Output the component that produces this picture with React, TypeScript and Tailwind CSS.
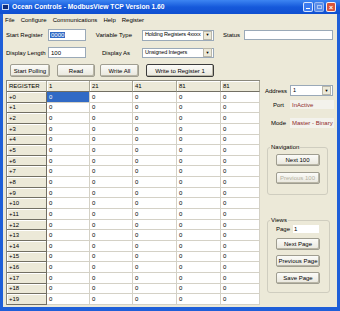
import React from 'react';

const cols = ['REGISTER', '1', '21', '41', '81', '81'];
const rows = Array.from({ length: 20 }, (_, i) => `+${i}`);

const Btn: React.FC<{ label: string; className?: string; disabled?: boolean; isDefault?: boolean }> = ({
  label,
  className = '',
  disabled,
  isDefault,
}) => (
  <div
    className={`flex items-center justify-center rounded-[2px] bg-gradient-to-b from-[#fbfbf8] to-[#e9e7dd] shadow-[inset_-1px_-1px_0_#b9b6a6] ${
      isDefault ? 'border border-[#3b3b3b]' : 'border border-[#9f9d90]'
    } ${disabled ? 'text-[#b5b2a4]' : 'text-black'} ${className}`}
  >
    {label}
  </div>
);

const Select: React.FC<{ value: string; className?: string }> = ({ value, className = '' }) => (
  <div className={`flex items-center bg-white border border-[#9aa9b8] ${className}`}>
    <span className="flex-1 pl-[2px] whitespace-nowrap overflow-hidden text-[5.5px] tracking-[-0.15px]">{value}</span>
    <span className="w-[9px] h-[9px] mr-[1px] flex items-center justify-center bg-[#ece9d8] border border-[#b9b7aa] text-[4px] leading-none">
      ▼
    </span>
  </div>
);

export default function App() {
  return (
    <div className="w-[340px] h-[311px] flex flex-col bg-[#1f5fd8] font-['Liberation_Sans',Arial,sans-serif] text-[6px] leading-none text-black overflow-hidden">
      {/* Title bar */}
      <div className="h-[14px] flex items-center bg-gradient-to-b from-[#3d85f2] via-[#1659db] to-[#0f4fd0] pl-[2px] pr-[4px]">
        <div className="w-[7px] h-[6px] bg-[#0d2c7a] border border-[#c9d7ef]" />
        <span className="ml-[3px] text-white font-bold text-[6.7px]">
          Ocean Controls - ModbusView TCP Version 1.60
        </span>
        <div className="ml-auto flex gap-[1px]">
          <div className="w-[10px] h-[10px] rounded-[2px] border border-white/80 bg-[#3c7bf0] flex items-end justify-center pb-[2px]">
            <div className="w-[4px] h-[1.5px] bg-white" />
          </div>
          <div className="w-[10px] h-[10px] rounded-[2px] border border-white/40 bg-[#5b8de8] flex items-center justify-center">
            <div className="w-[5px] h-[4px] border border-white/50" />
          </div>
          <div className="ml-[1px] w-[10px] h-[10px] rounded-[2px] border border-white/90 bg-[#d9553a] text-white text-[7px] font-bold flex items-center justify-center">
            ×
          </div>
        </div>
      </div>

      {/* Body */}
      <div className="flex-1 mx-[3px] mb-[4px] bg-[#ece9d8] flex flex-col">
        {/* Menu */}
        <div className="h-[11px] flex items-center pl-[2px] gap-[6px]">
          <span>File</span>
          <span>Configure</span>
          <span>Communications</span>
          <span>Help</span>
          <span>Register</span>
        </div>

        {/* Row 1 */}
        <div className="mt-[4px] h-[12px] flex items-center pl-[3px]">
          <span className="w-[42px]">Start Register</span>
          <div className="w-[38px] h-[12px] bg-white border border-[#9aa9b8] flex items-center pl-[1px]">
            <span className="bg-[#316ac5] text-white px-[1px]">0000</span>
          </div>
          <span className="w-[56px] text-right pr-[10px]">Variable Type</span>
          <Select value="Holding Registers 4xxxx" className="w-[72px] h-[11px]" />
          <span className="ml-[9px] w-[21px]">Status</span>
          <div className="w-[89px] h-[10px] bg-white border border-[#9aa9b8]" />
        </div>

        {/* Row 2 */}
        <div className="mt-[6px] h-[11px] flex items-center pl-[3px]">
          <span className="w-[42px]">Display Length</span>
          <div className="w-[38px] h-[11px] bg-white border border-[#9aa9b8] flex items-center pl-[2px]">100</div>
          <span className="w-[56px] text-right pr-[12px]">Display As</span>
          <Select value="Unsigned Integers" className="w-[72px] h-[10px]" />
        </div>

        {/* Buttons */}
        <div className="mt-[6px] h-[13px] flex items-stretch">
          <Btn label="Start Polling" className="ml-[7px] w-[40px]" />
          <Btn label="Read" className="ml-[7px] w-[38px]" />
          <Btn label="Write All" className="ml-[5px] w-[39px]" />
          <Btn label="Write to Register 1" className="ml-[7px] w-[68px]" isDefault />
        </div>

        {/* Main */}
        <div className="mt-[3px] flex flex-1">
          {/* Grid */}
          <div className="ml-[3px] self-start grid grid-cols-[40px_43px_43px_44px_44px_39px] grid-rows-[11px_repeat(20,10.65px)] border-t border-l border-[#8a887c]">
            {cols.map((c, i) => (
              <div
                key={`h${i}`}
                className="bg-[#ece9d8] border-r border-b border-r-[#a8a695] border-b-[#726f63] shadow-[inset_1px_1px_0_#fff] flex items-center pl-[2px]"
              >
                {c}
              </div>
            ))}
            {rows.map((r, ri) => (
              <React.Fragment key={r}>
                <div className="bg-[#ece9d8] border-r border-b border-r-[#726f63] border-b-[#726f63] shadow-[inset_1px_1px_0_#fff] flex items-center pl-[2px]">
                  {r}
                </div>
                {cols.slice(1).map((_, ci) => (
                  <div
                    key={ci}
                    className={`border-r border-b border-[#d4d1c6] flex items-center pl-[2px] ${
                      ri === 0 && ci === 0 ? 'bg-[#316ac5] text-white' : 'bg-white'
                    }`}
                  >
                    0
                  </div>
                ))}
              </React.Fragment>
            ))}
          </div>

          {/* Right panel */}
          <div className="flex-1 flex flex-col">
            <div className="mt-[5px] h-[11px] flex items-center">
              <span className="w-[30px] text-right pr-[3px]">Address</span>
              <Select value="1" className="w-[43px] h-[11px]" />
            </div>
            <div className="mt-[4px] h-[9px] flex items-center">
              <span className="w-[27px] text-right pr-[3px]">Port</span>
              <div className="ml-[3px] w-[44px] h-[9px] bg-[#f3f2ec] flex items-center pl-[2px] text-[#8e2a2a]">
                InActive
              </div>
            </div>
            <div className="mt-[9px] h-[10px] flex items-center">
              <span className="w-[27px] text-right pr-[1px]">Mode</span>
              <div className="ml-[3px] w-[44px] h-[10px] bg-[#f3f2ec] flex items-center pl-[2px] text-[#8e2a2a]">
                Master - Binary
              </div>
            </div>

            <fieldset className="mt-[16px] ml-[7px] w-[61px] h-[51px] border border-[#cfcdbf] rounded-[3px] flex flex-col items-center">
              <legend className="ml-[2px] px-[1px]">Navigation</legend>
              <Btn label="Next 100" className="mt-[4px] w-[44px] h-[12px]" />
              <Btn label="Previous 100" className="mt-[6px] w-[44px] h-[12px]" disabled />
            </fieldset>

            <fieldset className="mt-[22px] ml-[7px] w-[63px] h-[76px] border border-[#cfcdbf] rounded-[3px] flex flex-col">
              <legend className="ml-[2px] px-[1px]">Views</legend>
              <div className="ml-[8px] mt-[2px] h-[8px] flex items-center">
                <span className="w-[17px]">Page</span>
                <div className="w-[26px] h-[8px] bg-white flex items-center pl-[1px]">1</div>
              </div>
              <Btn label="Next Page" className="ml-[8px] mt-[5px] w-[44px] h-[12px]" />
              <Btn label="Previous Page" className="ml-[8px] mt-[5px] w-[44px] h-[12px]" />
              <Btn label="Save Page" className="ml-[8px] mt-[5px] w-[44px] h-[12px]" />
            </fieldset>
          </div>
        </div>
      </div>
    </div>
  );
}
